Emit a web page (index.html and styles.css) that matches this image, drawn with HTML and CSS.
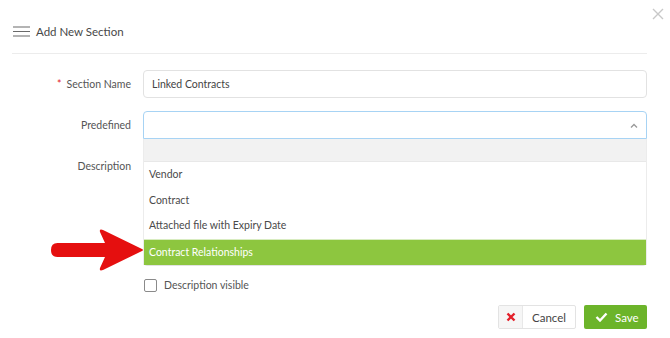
FILE: index.html
```html
<!DOCTYPE html>
<html>
<head>
<meta charset="utf-8">
<link rel="stylesheet" href="styles.css">
</head>
<body>
<div class="modal">
  <button class="close" aria-label="Close">
    <svg width="12" height="12" viewBox="0 0 12 12"><path d="M1 1L11 11M11 1L1 11" stroke="#c8c8c8" stroke-width="1.4" fill="none"/></svg>
  </button>
  <div class="header">
    <svg class="burger" width="17" height="11" viewBox="0 0 17 11"><path d="M0 1H17M0 5.5H17M0 10H17" stroke="#6a6a6a" stroke-width="1.1" fill="none"/></svg>
    <span class="title">Add New Section</span>
  </div>
  <div class="form">
    <label class="label"><span class="req">*</span>Section Name</label>
    <div class="input">Linked Contracts</div>

    <label class="label">Predefined</label>
    <div class="select-wrap">
      <div class="input focus">
        <svg class="chev" width="8" height="5" viewBox="0 0 8 5"><path d="M1 4.5L4 1.5L7 4.5" stroke="#999" stroke-width="1.3" fill="none"/></svg>
      </div>
      <ul class="menu">
        <li class="blank"></li>
        <li>Vendor</li>
        <li>Contract</li>
        <li>Attached file with Expiry Date</li>
        <li class="active">Contract Relationships</li>
      </ul>
    </div>

    <label class="label desc">Description</label>
    <div class="textarea"></div>

    <div></div>
    <label class="check"><span class="box"></span>Description visible</label>
  </div>
  <div class="footer">
    <button class="btn cancel"><span class="x">
      <svg width="10" height="10" viewBox="0 0 10 10"><path d="M1.5 1.5L8.5 8.5M8.5 1.5L1.5 8.5" stroke="#e3202a" stroke-width="2.4" fill="none"/></svg>
    </span><span class="ctext">Cancel</span></button>
    <button class="btn save">
      <svg width="13" height="10" viewBox="0 0 13 10"><path d="M1.5 5L5 8.5L11.5 1.5" stroke="#fff" stroke-width="2.4" fill="none"/></svg>
      Save</button>
  </div>
  <svg class="arrow" width="94" height="44" viewBox="0 0 94 44">
    <path d="M7.5 15H55L50 4Q49 0.5 53 2L92 21Q94 22 92 23L53 42Q49 43.5 50 40L55 29H7.5Q1 29 1 22Q1 15 7.5 15Z" fill="#e50f0f"/>
  </svg>
</div>
</body>
</html>
```
FILE: styles.css
```css
* { box-sizing: border-box; }
html, body { margin: 0; padding: 0; background: #fff; }
body {
  font-family: Lato, "Open Sans", sans-serif;
  color: #4a4a4a;
  width: 670px;
  height: 338px;
  overflow: hidden;
}
.modal {
  position: relative;
  padding: 0 23px 0 12px;
}
.close {
  position: absolute;
  top: 8px;
  right: 6px;
  border: 0;
  background: none;
  padding: 0;
  width: 12px;
  height: 12px;
}
.close svg { display: block; }
.header {
  display: flex;
  align-items: center;
  gap: 6px;
  height: 54px;
  padding: 9px 0 0 1px;
  border-bottom: 1px solid #ececec;
}
.burger { display: block; }
.title {
  font-size: 11.5px;
  color: #474747;
}
.form {
  display: grid;
  grid-template-columns: 119px 504px;
  column-gap: 12px;
  margin-top: 16px;
  row-gap: 13px;
  font-size: 10.5px;
}
.label {
  text-align: right;
  line-height: 28px;
  color: #555;
}
.label.desc { line-height: 28px; }
.req { color: #e3202a; margin-right: 5px; }
.input {
  height: 28px;
  border: 1px solid #e2e2e2;
  border-radius: 4px;
  padding: 0 8px;
  line-height: 26px;
  color: #444;
  position: relative;
}
.input.focus {
  border-color: #a7d3f4;
  border-radius: 4px 4px 0 0;
}
.chev {
  position: absolute;
  right: 8px;
  top: 11px;
}
.select-wrap { position: relative; }
.menu {
  position: absolute;
  top: 28px;
  left: 0;
  width: 504px;
  margin: 0;
  padding: 0;
  list-style: none;
  background: #fff;
  border-right: 1px solid #ececec;
  border-left: 1px solid #ececec;
  z-index: 2;
}
.menu li {
  height: 25.5px;
  line-height: 25px;
  padding: 0 5px;
  color: #4a4a4a;
}
.menu li.blank {
  height: 23px;
  background: #f2f2f2;
  border-bottom: 1px solid #e8e8e8;
}
.menu li.active {
  background: #8dc63f;
  color: #fff;
  height: 26px;
  border-top: 1px solid #d8ecc0;
}
.textarea {
  height: 114px;
  border: 1px solid #e2e2e2;
  border-radius: 4px;
}
.check {
  display: flex;
  align-items: center;
  gap: 7px;
  height: 14px;
  color: #555;
  margin-left: 1px;
  margin-top: -1px;
}
.box {
  width: 13px;
  height: 13px;
  border: 1px solid #8a8a8a;
  border-radius: 2px;
  background: #fff;
}
.footer {
  display: flex;
  justify-content: flex-end;
  gap: 8px;
  margin-top: 13px;
}
.btn {
  font-family: inherit;
  font-size: 11.5px;
  height: 24px;
  border-radius: 2px;
  padding: 0;
  display: flex;
  align-items: center;
  cursor: pointer;
}
.cancel {
  width: 78px;
  background: #fff;
  border: 1px solid #e3e3e3;
  color: #444;
}
.cancel .x {
  width: 24px;
  height: 22px;
  display: flex;
  align-items: center;
  justify-content: center;
  background: #f6f6f6;
  border-right: 1px solid #e8e8e8;
}
.cancel .ctext { flex: 1; text-align: center; }
.save {
  width: 63px;
  background: #6cb42a;
  border: 0;
  color: #fff;
  gap: 7px;
  padding-left: 11px;
}
.arrow {
  position: absolute;
  left: 50px;
  top: 228px;
  z-index: 3;
}
```
